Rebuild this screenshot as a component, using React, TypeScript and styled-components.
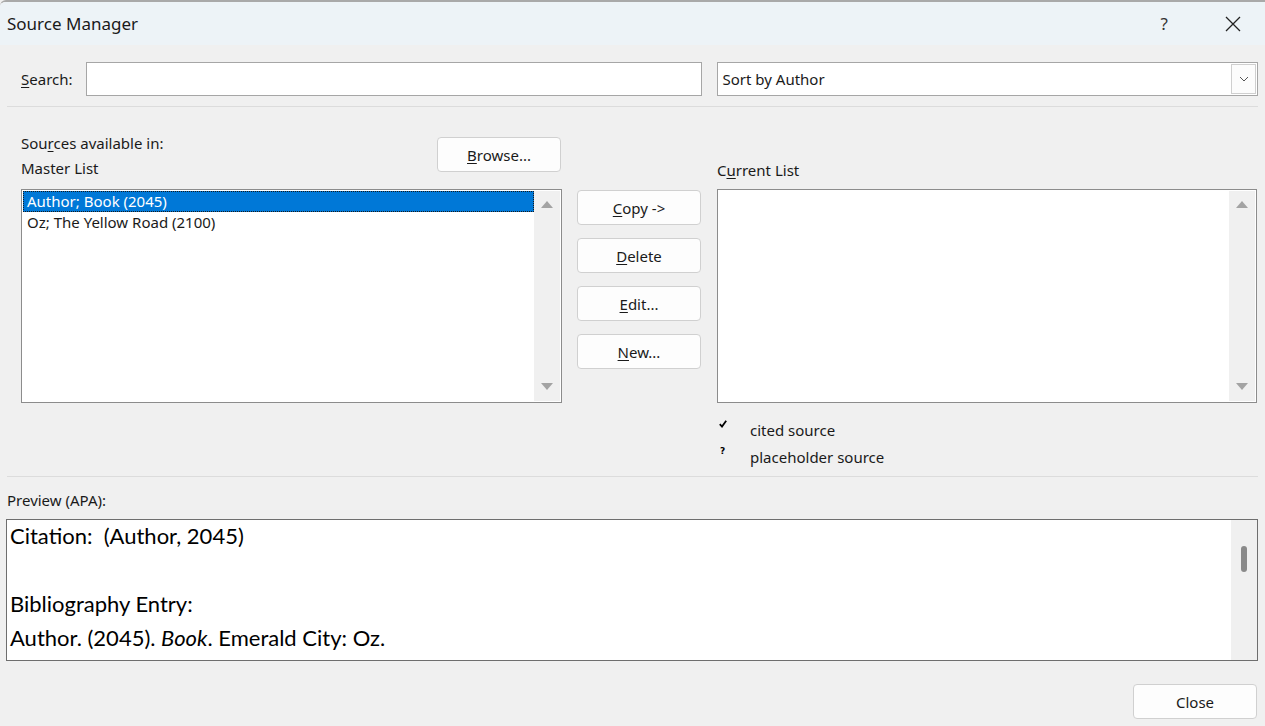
import React from 'react';
import styled, { createGlobalStyle } from 'styled-components';

const GlobalStyle = createGlobalStyle`
  html, body {
    margin: 0;
    padding: 0;
    background: #f0f0f0;
  }
  body {
    font-family: 'Noto Sans', 'Liberation Sans', sans-serif;
    color: #1a1a1a;
  }
`;

const masterSources = ['Author; Book (2045)', 'Oz; The Yellow Road (2100)'];
const actions = [
  { key: 'C', rest: 'opy ->' },
  { key: 'D', rest: 'elete' },
  { key: 'E', rest: 'dit...' },
  { key: 'N', rest: 'ew...' },
];

const Arrow = ({ down }: { down?: boolean }) => (
  <svg width="12" height="8" viewBox="0 0 12 8">
    {down ? <polygon points="0,0 12,0 6,7" fill="#a3a3a3" /> : <polygon points="6,0 12,7 0,7" fill="#a3a3a3" />}
  </svg>
);

const ListBox = ({ items }: { items: string[] }) => (
  <ListFrame>
    <ListItems>
      {items.map((item, i) => (
        <ListItem key={item} selected={i === 0}>
          {item}
        </ListItem>
      ))}
    </ListItems>
    <ScrollTrack>
      <Arrow />
      <Arrow down />
    </ScrollTrack>
  </ListFrame>
);

const App = () => {
  return (
    <>
      <GlobalStyle />
      <Window>
        <TitleBar>
          <Title>Source Manager</Title>
          <TitleButtons>
            <HelpGlyph>?</HelpGlyph>
            <svg width="16" height="16" viewBox="0 0 16 16">
              <path d="M1 1 L15 15 M15 1 L1 15" stroke="#222" strokeWidth="1.3" />
            </svg>
          </TitleButtons>
        </TitleBar>

        <SearchRow>
          <Label>
            <u>S</u>earch:
          </Label>
          <TextInput />
          <Select>
            <span>Sort by Author</span>
            <DropButton>
              <svg width="10" height="6" viewBox="0 0 10 6">
                <path d="M1 1 L5 5 L9 1" stroke="#555" strokeWidth="1" fill="none" />
              </svg>
            </DropButton>
          </Select>
        </SearchRow>

        <Divider top={10} />

        <ListsGrid>
          <LeftHead>
            <HeadLabels>
              <Label>
                Sou<u>r</u>ces available in:
              </Label>
              <Label>Master List</Label>
            </HeadLabels>
            <Button wide={124}>
              <u>B</u>rowse...
            </Button>
          </LeftHead>
          <div />
          <RightHead>
            <Label>
              C<u>u</u>rrent List
            </Label>
          </RightHead>

          <ListBox items={masterSources} />
          <ActionColumn>
            {actions.map(a => (
              <Button key={a.key} wide={124}>
                <u>{a.key}</u>
                {a.rest}
              </Button>
            ))}
          </ActionColumn>
          <RightColumn>
            <ListBox items={[]} />
            <Legend>
              <LegendRow>
                <Mark>
                  <svg width="8" height="8" viewBox="0 0 8 8">
                    <path d="M0.8 4.2 L3 6.6 L7.2 0.8" stroke="#000" strokeWidth="1.8" fill="none" />
                  </svg>
                </Mark>
                <Label>cited source</Label>
              </LegendRow>
              <LegendRow>
                <Mark>
                  <QMark>?</QMark>
                </Mark>
                <Label>placeholder source</Label>
              </LegendRow>
            </Legend>
          </RightColumn>
        </ListsGrid>

        <Divider top={9} />

        <PreviewSection>
          <Label>Preview (APA):</Label>
          <PreviewBox>
            <PreviewText>
              <p>Citation:&nbsp; (Author, 2045)</p>
              <p>&nbsp;</p>
              <p>Bibliography Entry:</p>
              <p>
                Author. (2045). <i>Book</i>. Emerald City: Oz.
              </p>
            </PreviewText>
            <PreviewScroll>
              <Thumb />
            </PreviewScroll>
          </PreviewBox>
        </PreviewSection>

        <Footer>
          <Button wide={124}>Close</Button>
        </Footer>
      </Window>
    </>
  );
};

export default App;

const Window = styled.div`
  width: 1265px;
  height: 726px;
  box-sizing: border-box;
  border-top: 2px solid #a9a9a9;
  border-top-left-radius: 6px;
  background: #f0f0f0;
  display: flex;
  flex-direction: column;
  overflow: hidden;
  font-size: 15px;
`;

const TitleBar = styled.div`
  height: 43px;
  flex-shrink: 0;
  background: #edf3f7;
  display: flex;
  align-items: center;
  justify-content: space-between;
  padding: 0 24px 0 7px;
`;

const Title = styled.span`
  font-size: 17px;
  color: #1a1a1a;
`;

const TitleButtons = styled.div`
  display: flex;
  align-items: center;
  gap: 57px;
`;

const HelpGlyph = styled.span`
  font-size: 17px;
  color: #333;
`;

const Label = styled.span`
  font-size: 15px;
  color: #1a1a1a;
  white-space: nowrap;
  u {
    text-decoration-thickness: 1px;
    text-underline-offset: 2px;
  }
`;

const SearchRow = styled.div`
  margin-top: 17px;
  display: flex;
  align-items: center;
  padding: 0 7px 0 21px;
  height: 34px;
  flex-shrink: 0;
`;

const TextInput = styled.div`
  margin-left: 13px;
  width: 616px;
  height: 34px;
  box-sizing: border-box;
  background: #fff;
  border: 1px solid #a6a6a6;
`;

const Select = styled.div`
  margin-left: 15px;
  flex: 1;
  height: 34px;
  box-sizing: border-box;
  background: #fff;
  border: 1px solid #a6a6a6;
  display: flex;
  align-items: center;
  justify-content: space-between;
  padding: 0 1px 0 5px;
  font-size: 15px;
`;

const DropButton = styled.div`
  width: 25px;
  height: 30px;
  box-sizing: border-box;
  border: 1px solid #cfcfcf;
  background: #fcfcfc;
  display: flex;
  align-items: center;
  justify-content: center;
`;

const Divider = styled.div<{ top: number }>`
  margin: ${p => p.top}px 7px 0 7px;
  height: 1px;
  flex-shrink: 0;
  background: #dcdcdc;
`;

const ListsGrid = styled.div`
  display: grid;
  grid-template-columns: 541px 124px 541px;
  grid-template-rows: 82px auto;
  column-gap: 15px;
  padding: 0 7px 0 21px;
`;

const LeftHead = styled.div`
  display: flex;
  justify-content: space-between;
  align-items: flex-start;
  padding-top: 30px;
  padding-right: 1px;
`;

const HeadLabels = styled.div`
  display: flex;
  flex-direction: column;
  gap: 5px;
  margin-top: -4px;
`;

const RightHead = styled.div`
  display: flex;
  align-items: flex-end;
  padding-bottom: 9px;
  margin-left: 1px;
`;

const Button = styled.div<{ wide: number }>`
  width: ${p => p.wide}px;
  height: 35px;
  box-sizing: border-box;
  background: #fdfdfd;
  border: 1px solid #d0d0d0;
  border-radius: 4px;
  display: flex;
  align-items: center;
  justify-content: center;
  font-size: 15px;
  color: #1a1a1a;
  u {
    text-decoration-thickness: 1px;
    text-underline-offset: 2px;
  }
`;

const ListFrame = styled.div`
  height: 214px;
  box-sizing: border-box;
  background: #fff;
  border: 1px solid #8c8c8c;
  display: flex;
  padding: 1px;
`;

const ListItems = styled.div`
  flex: 1;
  display: flex;
  flex-direction: column;
`;

const ListItem = styled.div<{ selected: boolean }>`
  height: 21px;
  line-height: 20px;
  padding-left: 4px;
  font-size: 15px;
  box-sizing: border-box;
  color: ${p => (p.selected ? '#fff' : '#1a1a1a')};
  background: ${p => (p.selected ? '#0078d7' : 'transparent')};
  outline: ${p => (p.selected ? '1px dotted #1a1a1a' : 'none')};
  outline-offset: -1px;
`;

const ScrollTrack = styled.div`
  width: 26px;
  background: #f0f0f0;
  display: flex;
  flex-direction: column;
  align-items: center;
  justify-content: space-between;
  padding: 10px 0 10px;
`;

const ActionColumn = styled.div`
  display: flex;
  flex-direction: column;
  gap: 13px;
  padding-top: 1px;
`;

const RightColumn = styled.div`
  display: flex;
  flex-direction: column;
  margin-left: 1px;
`;

const Legend = styled.div`
  display: flex;
  flex-direction: column;
  gap: 7px;
  margin-top: 17px;
`;

const LegendRow = styled.div`
  display: flex;
  align-items: center;
  height: 20px;
`;

const Mark = styled.span`
  width: 33px;
  flex-shrink: 0;
  padding-left: 2px;
  box-sizing: border-box;
  display: flex;
  margin-top: -12px;
`;

const QMark = styled.span`
  font-family: 'DejaVu Sans', sans-serif;
  font-size: 9px;
  font-weight: bold;
  color: #000;
  padding-left: 1px;
`;

const PreviewSection = styled.div`
  display: flex;
  flex-direction: column;
  padding: 13px 7px 0 6px;
  gap: 9px;
  > span {
    padding-left: 1px;
  }
`;

const PreviewBox = styled.div`
  height: 142px;
  flex-shrink: 0;
  box-sizing: border-box;
  background: #fff;
  border: 1px solid #6e6e6e;
  display: flex;
`;

const PreviewText = styled.div`
  flex: 1;
  padding: 0 0 0 3px;
  font-family: Lato, 'Noto Sans', sans-serif;
  font-size: 22px;
  color: #000;
  p {
    margin: 0;
    height: 34px;
    line-height: 32px;
  }
`;

const PreviewScroll = styled.div`
  width: 26px;
  background: #f0f0f0;
  display: flex;
  justify-content: center;
  padding-top: 26px;
`;

const Thumb = styled.div`
  width: 6px;
  height: 26px;
  border-radius: 3px;
  background: #8a8a8a;
`;

const Footer = styled.div`
  display: flex;
  justify-content: flex-end;
  padding: 23px 8px 0 0;
`;
